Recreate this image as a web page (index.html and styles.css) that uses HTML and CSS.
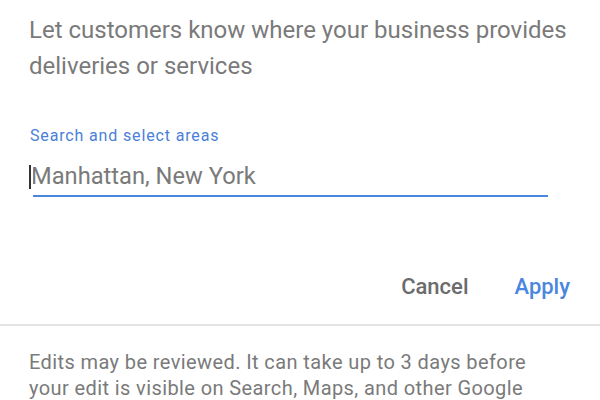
FILE: index.html
```html
<!DOCTYPE html>
<html lang="en">
<head>
    <meta charset="UTF-8">
    <meta name="viewport" content="width=device-width, initial-scale=1.0">
    <title>Service areas</title>
    <link rel="stylesheet" href="styles.css">
</head>
<body>
    <div class="dialog">
        <div class="main">
            <p class="intro">Let customers know where your business provides deliveries or services</p>
            <div class="field">
                <label for="area" class="fieldLabel">Search and select areas</label>
                <div class="inputWrap">
                    <span class="caret"></span>
                    <input id="area" type="text" value="Manhattan, New York">
                </div>
            </div>
            <div class="actions">
                <button class="btn cancel">Cancel</button>
                <button class="btn apply">Apply</button>
            </div>
        </div>
        <div class="footer">
            <p>Edits may be reviewed. It can take up to 3 days before your edit is visible on Search, Maps, and other Google services.</p>
        </div>
    </div>
</body>
</html>
```

FILE: styles.css
```css
body{
    margin: 0;
    background: #fff;
    font-family: Roboto, "Liberation Sans", sans-serif;
    overflow: hidden;
}
.dialog{
    width: 600px;
    height: 400px;
    overflow: hidden;
}
.main{
    padding: 12px 30px 0 29px;
    border-bottom: 2px solid #e4e4e4;
}
.intro{
    margin: 0;
    font-size: 24px;
    line-height: 36px;
    color: #7a7a7a;
    width: 545px;
}
.field{
    margin-top: 43px;
}
.fieldLabel{
    display: block;
    font-size: 16px;
    letter-spacing: 0.85px;
    color: #4a80d6;
    line-height: 18px;
    padding-left: 1px;
}
.inputWrap{
    position: relative;
    margin-top: 17px;
    width: 519px;
}
.caret{
    position: absolute;
    left: 0;
    top: 3px;
    width: 2px;
    height: 24px;
    background: #333;
}
#area{
    display: block;
    box-sizing: border-box;
    width: 515px;
    margin-left: 4px;
    padding: 0 0 5px 0;
    border: none;
    border-bottom: 2px solid #4a86e0;
    outline: none;
    font-family: Roboto, "Liberation Sans", sans-serif;
    font-size: 23.7px;
    line-height: 28px;
    color: #7a7a7a;
    text-indent: -2px;
}
.actions{
    display: flex;
    justify-content: flex-end;
    gap: 46px;
    margin-top: 78px;
    padding-bottom: 25px;
}
.btn{
    border: none;
    background: none;
    padding: 0;
    font-family: Roboto, "Liberation Sans", sans-serif;
    font-size: 22px;
    font-weight: 500;
    line-height: 24px;
}
.cancel{
    color: #6c6c6c;
}
.apply{
    color: #4a86e0;
}
.footer{
    padding: 23px 20px 0 29px;
}
.footer p{
    margin: 0;
    font-size: 20px;
    letter-spacing: 0.4px;
    line-height: 26px;
    color: #7a7a7a;
    width: 510px;
}
```
